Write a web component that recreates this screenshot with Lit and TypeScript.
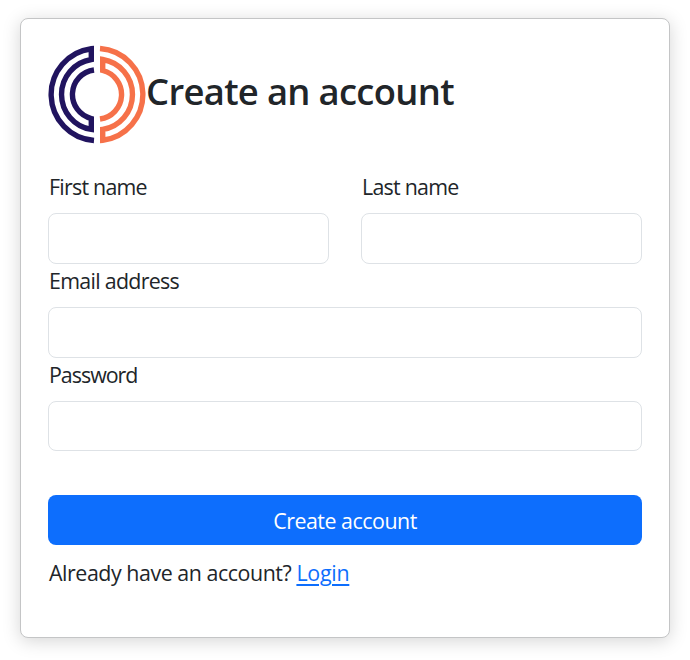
import { LitElement, html, css } from "lit";
import { customElement } from "lit/decorators.js";

@customElement("app-root")
export class AppRoot extends LitElement {
  static styles = css`
    :host {
      display: block;
      box-sizing: border-box;
      height: 660px;
      padding: 18px 20px 22px;
      background: #fff;
      color: #212529;
      font-family: "Segoe UI", "Open Sans", "Noto Sans", sans-serif;
      font-size: 21.4px;
      line-height: 32px;
    }
    *, *::before, *::after { box-sizing: border-box; }
    .card {
      height: 620px;
      padding: 26px 27px;
      border: 1px solid #c4c5c6;
      border-radius: 8px;
      background: #fff;
      box-shadow: 0 3px 18px rgba(0, 0, 0, 0.17);
    }
    .head { display: flex; align-items: center; height: 99px; }
    .logo { width: 98px; height: 99px; flex: none; display: block; }
    h1 {
      margin: 0 0 6px;
      font-size: 36.4px;
      line-height: 45px;
      font-weight: 600;
      white-space: nowrap;
      letter-spacing: -0.68px;
    }
    .form { display: flex; flex-direction: column; margin-top: 26px; }
    .row { display: grid; grid-template-columns: 1fr 1fr; gap: 32px; }
    .field { display: flex; flex-direction: column; height: 94px; }
    label { height: 43px; padding: 1px 0 0 1px; }
    label span { display: inline-block; white-space: nowrap; }
    input {
      display: block;
      width: 100%;
      height: 51px;
      border: 1px solid #dee2e6;
      border-radius: 8px;
      background: #fff;
      padding: 8px 16px;
      font: inherit;
      outline: none;
    }
    .last input { height: 50px; }
    button {
      height: 50px;
      margin: 43px 0 0;
      padding: 2px 0 0;
      border: 0;
      border-radius: 8px;
      background: #0d6efd;
      color: #fff;
      font: inherit;
      letter-spacing: -0.48px;
    }
    .first, .last-name { letter-spacing: -0.75px; }
    .email { letter-spacing: -0.7px; }
    .password { letter-spacing: -1px; }
    .foot { margin: 12px 0 0 1px; white-space: nowrap; letter-spacing: -0.45px; }
    a {
      color: #0d6efd;
      letter-spacing: -0.25px;
      text-decoration: underline;
      text-decoration-thickness: 2px;
      text-underline-offset: 3px;
    }
    .navy, .coral { fill: none; stroke-width: 5.4; stroke-linejoin: miter; stroke-linecap: butt; }
    .navy { stroke: #21145f; }
    .coral { stroke: #f67149; }
  `;

  private field(id: string, label: string, type = "text", extra = "") {
    return html`<div class="field ${extra}">
      <label for=${id}><span class=${id}>${label}</span></label>
      <input id=${id} type=${type} />
    </div>`;
  }

  render() {
    return html`
      <main class="card">
        <header class="head">
          <svg class="logo" viewBox="-49 -49.5 98 99" aria-hidden="true">
            <path class="navy" d="M-3 46A46.1 46.1 0 0 1 -5.7 -45.7V-35A35.4 35.4 0 0 0 -5.7 34.9V24A24.7 24.7 0 0 1 -3 -24.5" />
            <path class="coral" d="M3 -46A46.1 46.1 0 0 1 5.7 45.7V34.9A35.4 35.4 0 0 0 5.7 -35V-24A24.7 24.7 0 0 1 3 24.5" />
          </svg>
          <h1>Create an account</h1>
        </header>
        <form class="form">
          <div class="row">
            ${this.field("first", "First name")} ${this.field("last-name", "Last name")}
          </div>
          ${this.field("email", "Email address", "email")}
          ${this.field("password", "Password", "password", "last")}
          <button type="button">Create account</button>
        </form>
        <p class="foot">Already have an account? <a href="#">Login</a></p>
      </main>
    `;
  }
}
